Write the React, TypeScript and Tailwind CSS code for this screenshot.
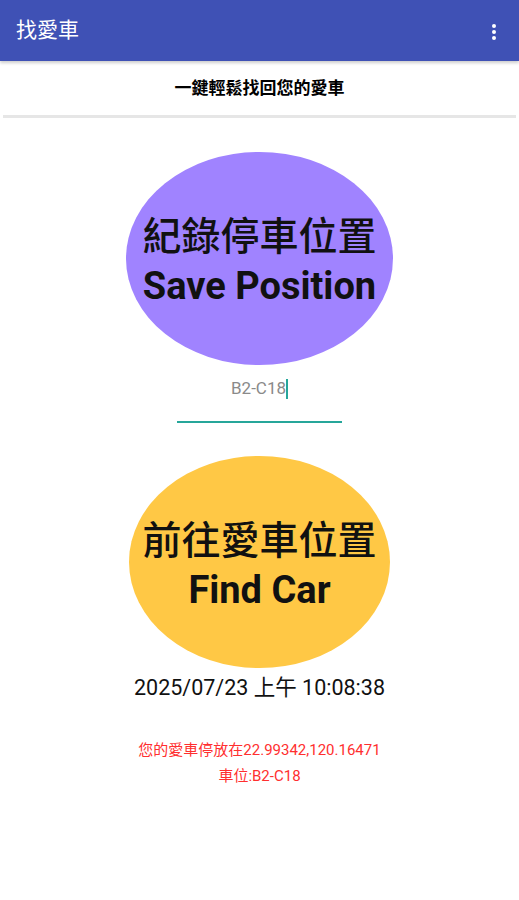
import React from "react";

const cjk = { fontFamily: 'Roboto, "Noto Sans CJK TC", sans-serif' };

export default function App() {
  return (
    <div className="w-[519px] h-[900px] bg-white flex flex-col" style={cjk}>
      <div className="h-[61px] bg-[#3F51B5] flex items-center justify-between pl-4 pr-[23px] shadow-[0_2px_3px_rgba(0,0,0,0.2)]">
        <span className="text-white text-[21px] leading-none">找愛車</span>
        <div className="flex flex-col gap-[2px] pt-[2px]">
          <span className="w-[4px] h-[4px] rounded-full bg-white" />
          <span className="w-[4px] h-[4px] rounded-full bg-white" />
          <span className="w-[4px] h-[4px] rounded-full bg-white" />
        </div>
      </div>
      <div className="h-[54px] flex items-center justify-center pt-[2px]">
        <span className="text-[17px] font-bold text-black">一鍵輕鬆找回您的愛車</span>
      </div>
      <div className="mx-[3px] h-[3px] bg-[#e6e6e6]" />
      <div className="flex flex-col items-center">
        <div className="mt-[34px] w-[267px] h-[213px] rounded-[50%] bg-[#A083FF] flex flex-col items-center justify-center pt-[6px] text-[#111]">
          <span className="text-[39px] leading-[49px] font-medium">紀錄停車位置</span>
          <span className="text-[38px] leading-[48px] font-bold">Save Position</span>
        </div>
        <div className="mt-[12px] w-[165px] flex flex-col items-center">
          <div className="h-[24px] flex items-center">
            <span className="text-[17px] text-[#8a8a8a]">B2-C18</span>
            <span className="w-[2px] h-[20px] bg-[#26A69A]" />
          </div>
          <div className="mt-[20px] w-[165px] h-[2px] bg-[#26A69A]" />
        </div>
        <div className="mt-[33px] w-[261px] h-[212px] rounded-[50%] bg-[#FFC845] flex flex-col items-center justify-center pt-[6px] text-[#111]">
          <span className="text-[39px] leading-[49px] font-medium">前往愛車位置</span>
          <span className="text-[38px] leading-[48px] font-bold">Find Car</span>
        </div>
        <div className="mt-[4px] text-[21.5px] text-[#111] leading-[32px]">2025/07/23 上午 10:08:38</div>
        <div className="mt-[33px] flex flex-col items-center text-[#FF2F2F] text-[15px] leading-[26px]">
          <span>您的愛車停放在22.99342,120.16471</span>
          <span>車位:B2-C18</span>
        </div>
      </div>
    </div>
  );
}
